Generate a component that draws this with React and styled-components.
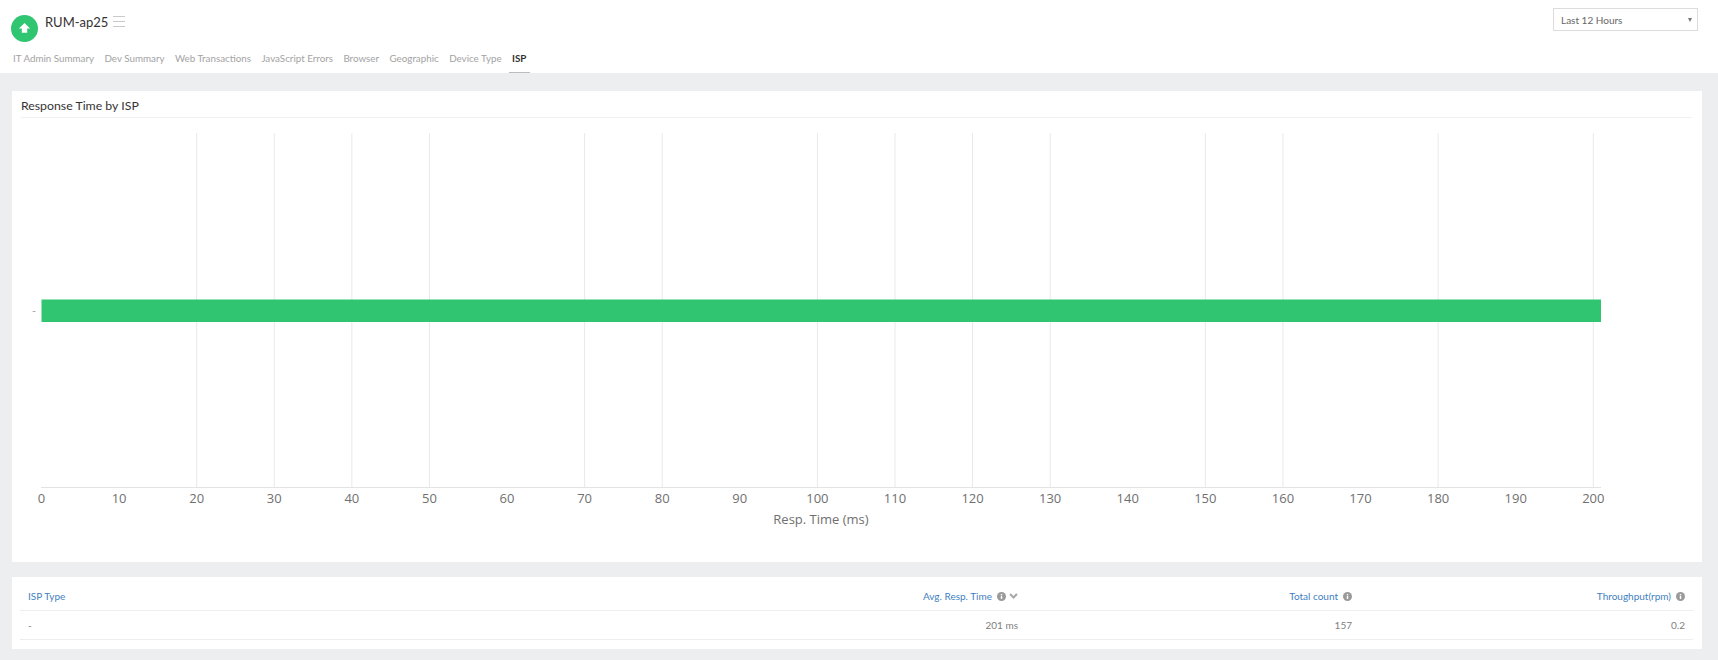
import styled, { createGlobalStyle } from "styled-components";

const TABS = [
	"IT Admin Summary",
	"Dev Summary",
	"Web Transactions",
	"JavaScript Errors",
	"Browser",
	"Geographic",
	"Device Type",
	"ISP",
];

const TICKS = Array.from({ length: 21 }, (_, i) => i * 10);
// the source chart skips a few of its grid lines
const GRID = [20, 30, 40, 50, 70, 80, 100, 110, 120, 130, 150, 160, 180, 200];

const tickX = (value) => 41.5 + value * 7.759;

export default function App() {
	return (
		<>
			<GlobalStyle />
			<Header>
				<TopRow>
					<Brand>
						<StatusIcon viewBox="0 0 26 26">
							<circle cx="13" cy="13" r="13" fill="#2fc571" />
							<path d="M13 7.6 L18.4 13 H15.6 V17 H10.4 V13 H7.6 Z" fill="#fff" />
						</StatusIcon>
						<Title>RUM-ap25</Title>
						<Burger viewBox="0 0 12 11">
							<path d="M0 .5H12M0 5.5H12M0 10.5H12" stroke="#c9c9c9" strokeWidth="1" />
						</Burger>
					</Brand>
					<Select>
						<span>Last 12 Hours</span>
						<Caret />
					</Select>
				</TopRow>
				<Tabs>
					{TABS.map((tab) => (
						<Tab key={tab} $active={tab === "ISP"}>
							{tab}
						</Tab>
					))}
				</Tabs>
			</Header>

			<Content>
				<ChartCard>
					<CardTitle>Response Time by ISP</CardTitle>
					<Chart viewBox="12 118 1690 444">
						{GRID.map((value) => (
							<line
								key={value}
								x1={tickX(value)}
								x2={tickX(value)}
								y1="133"
								y2="488"
								stroke="#e9e9e9"
							/>
						))}
						<rect x="41.5" y="299.5" width="1559.5" height="22.5" fill="#2fc571" />
						<line x1="41" x2="1601" y1="487.5" y2="487.5" stroke="#e3e3e3" />
						<text x="34" y="314" fontSize="11" fill="#999" textAnchor="middle">
							-
						</text>
						{TICKS.map((value) => (
							<text
								key={value}
								x={tickX(value)}
								y="503"
								fontSize="13"
								fill="#707070"
								textAnchor="middle"
							>
								{value}
							</text>
						))}
						<text x="821" y="524" fontSize="13" fill="#707070" textAnchor="middle">
							Resp. Time (ms)
						</text>
					</Chart>
				</ChartCard>

				<TableCard>
					<Table>
						<thead>
							<tr>
								<HeadCell $width="700px">ISP Type</HeadCell>
								<HeadCell $right $width="306px">
									<HeadInner>
										Avg. Resp. Time
										<InfoIcon />
										<Chevron viewBox="0 0 10 7">
											<path
												d="M1 1.2 5 5.2 9 1.2"
												fill="none"
												stroke="#a8a8a8"
												strokeWidth="2.4"
											/>
										</Chevron>
									</HeadInner>
								</HeadCell>
								<HeadCell $right $width="334px">
									<HeadInner>
										Total count
										<InfoIcon />
									</HeadInner>
								</HeadCell>
								<HeadCell $right>
									<HeadInner>
										Throughput(rpm)
										<InfoIcon />
									</HeadInner>
								</HeadCell>
							</tr>
						</thead>
						<tbody>
							<tr>
								<BodyCell>-</BodyCell>
								<BodyCell $right>201 ms</BodyCell>
								<BodyCell $right>157</BodyCell>
								<BodyCell $right>0.2</BodyCell>
							</tr>
						</tbody>
					</Table>
				</TableCard>
			</Content>
		</>
	);
}

function InfoIcon() {
	return (
		<InfoSvg viewBox="0 0 10 10">
			<circle cx="5" cy="5" r="5" fill="#9a9a9a" />
			<rect x="4.2" y="4.3" width="1.6" height="3.4" fill="#fff" />
			<rect x="4.2" y="2.2" width="1.6" height="1.4" fill="#fff" />
		</InfoSvg>
	);
}

const GlobalStyle = createGlobalStyle`
	html, body {
		margin: 0;
		background-color: #edeef0;
		font-family: "Lato", "Open Sans", sans-serif;
	}
`;

const Header = styled.header`
	height: 73px;
	background-color: #fff;
	box-sizing: border-box;
	padding: 8px 20px 0 10px;
`;

const TopRow = styled.div`
	display: flex;
	justify-content: space-between;
	align-items: flex-start;
	height: 37px;
`;

const Brand = styled.div`
	display: flex;
	align-items: flex-start;
	padding: 7px 0 0 1px;
`;

const StatusIcon = styled.svg`
	width: 27px;
	height: 27px;
`;

const Title = styled.div`
	margin: -1px 0 0 7px;
	font-size: 13px;
	line-height: 16px;
	color: #333;
`;

const Burger = styled.svg`
	width: 12px;
	height: 11px;
	margin: 1px 0 0 5px;
`;

const Select = styled.div`
	width: 145px;
	height: 23px;
	box-sizing: border-box;
	display: flex;
	align-items: center;
	justify-content: space-between;
	padding: 0 5px 0 7px;
	border: 1px solid #dcdcdc;
	font-size: 10px;
	color: #666;
`;

const Caret = styled.i`
	width: 0;
	height: 0;
	border-left: 2.5px solid transparent;
	border-right: 2.5px solid transparent;
	border-top: 4px solid #777;
`;

const Tabs = styled.nav`
	display: flex;
	gap: 10.4px;
	padding-left: 3px;
`;

const Tab = styled.div`
	height: 28px;
	box-sizing: border-box;
	padding-top: 6px;
	font-size: 9.8px;
	line-height: 14px;
	white-space: nowrap;
	color: ${(props) => (props.$active ? "#333" : "#a3a3a3")};
	font-weight: ${(props) => (props.$active ? 700 : 400)};
	position: relative;

	&::after {
		content: "";
		display: ${(props) => (props.$active ? "block" : "none")};
		position: absolute;
		left: -3px;
		right: -4px;
		bottom: 0;
		height: 1px;
		background-color: #bdbdbd;
	}
`;

const Content = styled.main`
	display: flex;
	flex-direction: column;
	gap: 15px;
	padding: 18px 16px 10px 12px;
`;

const ChartCard = styled.section`
	background-color: #fff;
	height: 471px;
`;

const CardTitle = styled.h2`
	margin: 0 10px 0 9px;
	height: 27px;
	box-sizing: border-box;
	padding-top: 7px;
	border-bottom: 1px solid #f0f0f0;
	font-size: 12.3px;
	line-height: 15px;
	font-weight: 400;
	color: #333;
`;

const Chart = styled.svg`
	display: block;
	width: 100%;
	height: 444px;
	font-family: "Open Sans", sans-serif;
`;

const TableCard = styled.section`
	background-color: #fff;
	height: 72px;
	padding: 0 9px 0 8px;
`;

const Table = styled.table`
	width: 100%;
	border-collapse: collapse;
	table-layout: fixed;
`;

const HeadCell = styled.th`
	width: ${(props) => props.$width || "auto"};
	height: 33px;
	box-sizing: border-box;
	padding: 6px 8px 0;
	border-bottom: 1px solid #eeeeee;
	text-align: ${(props) => (props.$right ? "right" : "left")};
	font-size: 10px;
	font-weight: 400;
	color: #3f7fbf;
`;

const HeadInner = styled.span`
	display: inline-flex;
	align-items: center;
	gap: 5px;
`;

const BodyCell = styled.td`
	height: 29px;
	box-sizing: border-box;
	padding: 0 8px;
	border-bottom: 1px solid #eeeeee;
	text-align: ${(props) => (props.$right ? "right" : "left")};
	font-size: 10px;
	color: #808080;
`;

const InfoSvg = styled.svg`
	width: 9px;
	height: 9px;
`;

const Chevron = styled.svg`
	width: 9px;
	height: 6px;
	margin-left: -2px;
`;
